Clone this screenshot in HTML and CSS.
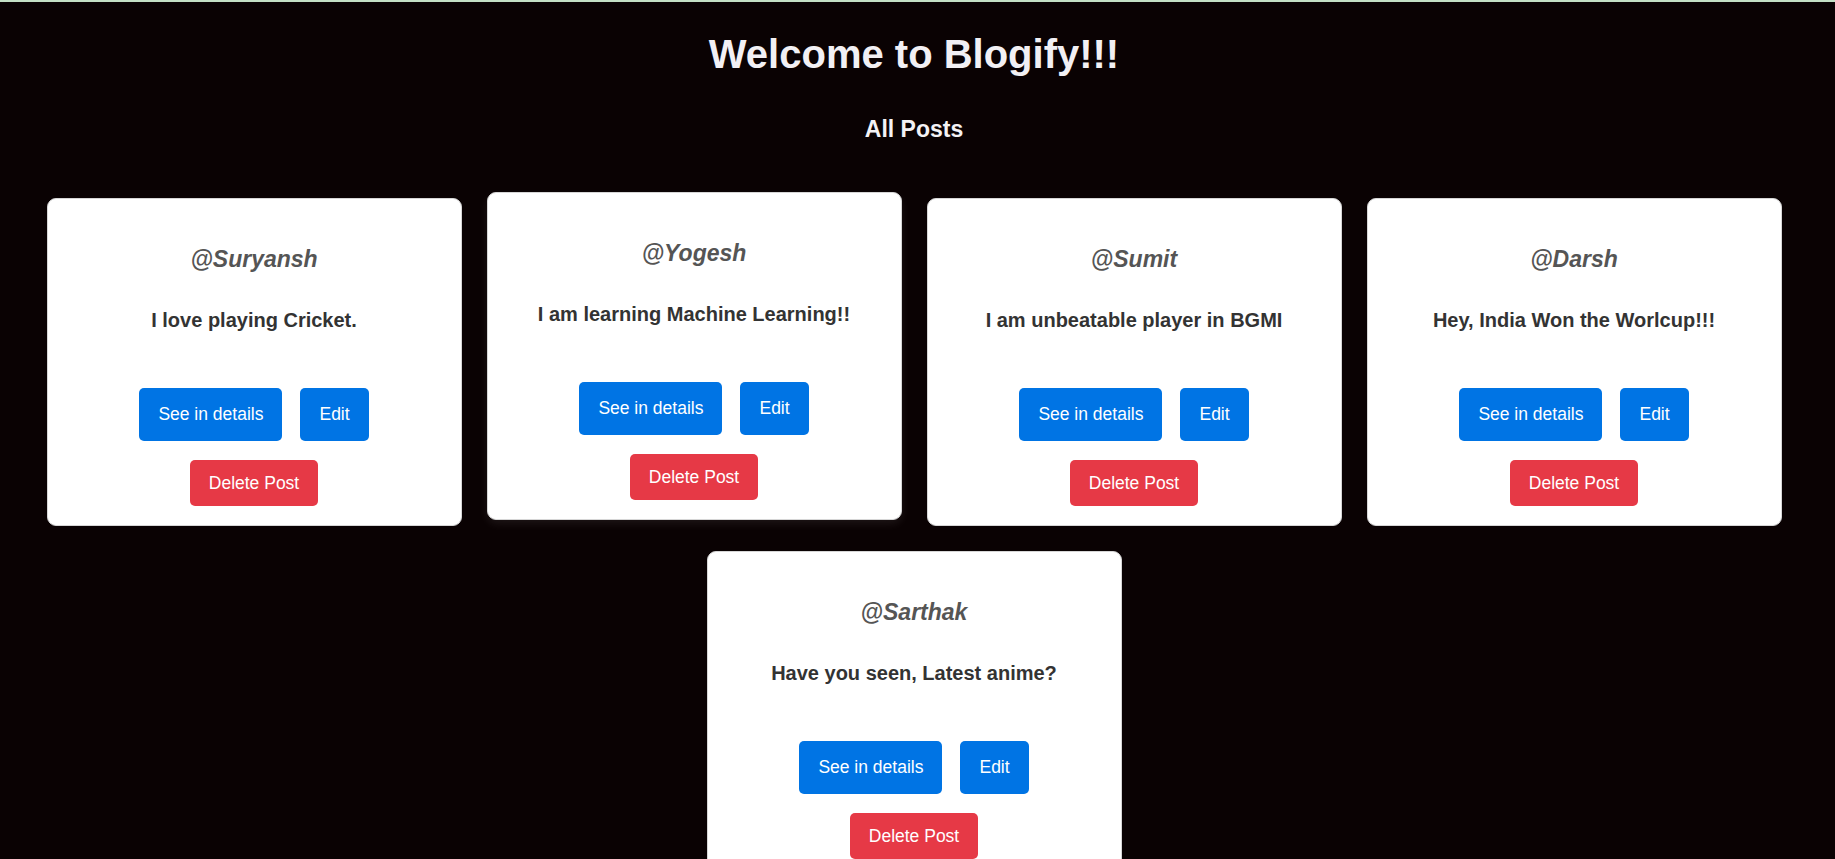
FILE: index.html
```html
<!DOCTYPE html>
<html lang="en">
<head>
<meta charset="utf-8">
<title>Blogify</title>
<link rel="stylesheet" href="styles.css">
</head>
<body>
<div class="topbar"></div>
<main class="page">
  <h1 class="title">Welcome to Blogify!!!</h1>
  <h2 class="subtitle">All Posts</h2>
  <section class="posts">
    <article class="card">
      <h3 class="user">@Suryansh</h3>
      <p class="content">I love playing Cricket.</p>
      <div class="actions">
        <button class="btn btn-blue">See in details</button>
        <button class="btn btn-blue">Edit</button>
      </div>
      <button class="btn btn-red">Delete Post</button>
    </article>
    <article class="card lifted">
      <h3 class="user">@Yogesh</h3>
      <p class="content">I am learning Machine Learning!!</p>
      <div class="actions">
        <button class="btn btn-blue">See in details</button>
        <button class="btn btn-blue">Edit</button>
      </div>
      <button class="btn btn-red">Delete Post</button>
    </article>
    <article class="card">
      <h3 class="user">@Sumit</h3>
      <p class="content">I am unbeatable player in BGMI</p>
      <div class="actions">
        <button class="btn btn-blue">See in details</button>
        <button class="btn btn-blue">Edit</button>
      </div>
      <button class="btn btn-red">Delete Post</button>
    </article>
    <article class="card">
      <h3 class="user">@Darsh</h3>
      <p class="content">Hey, India Won the Worlcup!!!</p>
      <div class="actions">
        <button class="btn btn-blue">See in details</button>
        <button class="btn btn-blue">Edit</button>
      </div>
      <button class="btn btn-red">Delete Post</button>
    </article>
    <article class="card">
      <h3 class="user">@Sarthak</h3>
      <p class="content">Have you seen, Latest anime?</p>
      <div class="actions">
        <button class="btn btn-blue">See in details</button>
        <button class="btn btn-blue">Edit</button>
      </div>
      <button class="btn btn-red">Delete Post</button>
    </article>
  </section>
</main>
</body>
</html>
```

FILE: styles.css
```css
* {
  box-sizing: border-box;
}

html, body {
  margin: 0;
  padding: 0;
  background: #0a0203;
}

body {
  font-family: "Liberation Sans", Arial, sans-serif;
  min-height: 100vh;
}

.topbar {
  height: 2px;
  background: #c3dfc5;
}

.page {
  width: calc(100% - 7px);
  text-align: center;
}

.title {
  margin: 29px 0 0;
  font-size: 40px;
  line-height: 46px;
  font-weight: bold;
  color: #f2f0f4;
}

.subtitle {
  margin: 39px 0 0;
  font-size: 23px;
  line-height: 27px;
  font-weight: bold;
  color: #f4f2f5;
}

.posts {
  display: flex;
  flex-wrap: wrap;
  justify-content: center;
  gap: 25px;
  margin-top: 55px;
}

.card {
  width: 415px;
  background: #ffffff;
  border: 1px solid #d6d6d6;
  border-radius: 9px;
  padding: 0 20px 19px;
  display: flex;
  flex-direction: column;
  align-items: center;
}

.card.lifted {
  transform: translateY(-6px);
  box-shadow: 0 4px 10px rgba(255, 255, 255, 0.08);
}

.user {
  margin: 47px 0 0;
  font-size: 23px;
  line-height: 26px;
  font-weight: bold;
  font-style: italic;
  color: #555555;
}

.content {
  margin: 37px 0 0;
  font-size: 20px;
  line-height: 23px;
  font-weight: bold;
  color: #333333;
}

.actions {
  display: flex;
  justify-content: center;
  gap: 18px;
  margin-top: 56px;
}

.btn {
  font-family: "Liberation Sans", Arial, sans-serif;
  font-size: 17.5px;
  line-height: 21px;
  color: #ffffff;
  border: none;
  border-radius: 5px;
  padding: 0 19px;
  cursor: pointer;
}

.btn-blue {
  background: #0074e4;
  height: 53px;
}

.btn-red {
  background: #e63946;
  height: 46px;
  margin-top: 19px;
}
```
